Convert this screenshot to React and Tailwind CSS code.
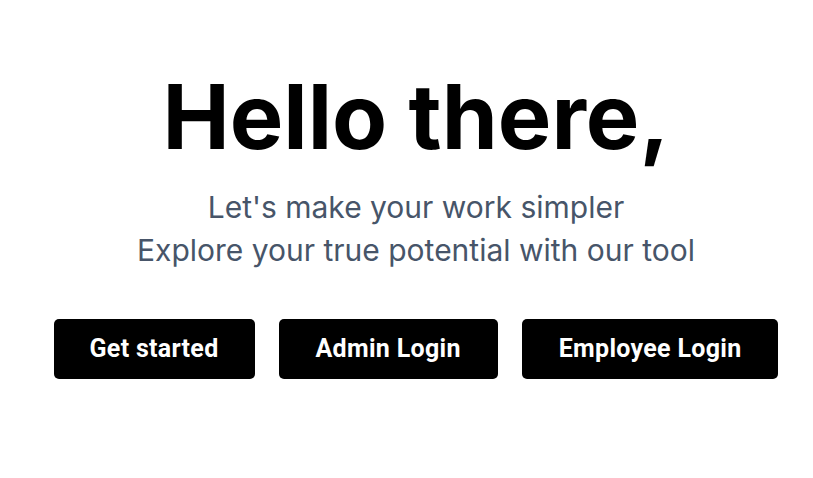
export default function App() {
  return (
    <div className="min-h-[478px] w-full bg-white flex flex-col items-center pl-[19px] pt-[62px] font-['Inter',sans-serif]">
      <h1 className="text-[90px] leading-[110px] font-bold text-black">
        Hello there,
      </h1>
      <div className="mt-[14px] text-center text-[30px] leading-[43px] text-[#475569]">
        <p>Let's make your work simpler</p>
        <p>Explore your true potential with our tool</p>
      </div>
      <div className="mt-[47px] flex gap-6 font-['Roboto',sans-serif] tracking-[0.3px]">
        <button className="h-[60px] px-[36px] bg-black text-white rounded-[5px] text-[25px] font-bold">Get started</button>
        <button className="h-[60px] px-[37px] bg-black text-white rounded-[5px] text-[25px] font-bold">Admin Login</button>
        <button className="h-[60px] px-[37px] bg-black text-white rounded-[5px] text-[25px] font-bold">Employee Login</button>
      </div>
    </div>
  );
}
